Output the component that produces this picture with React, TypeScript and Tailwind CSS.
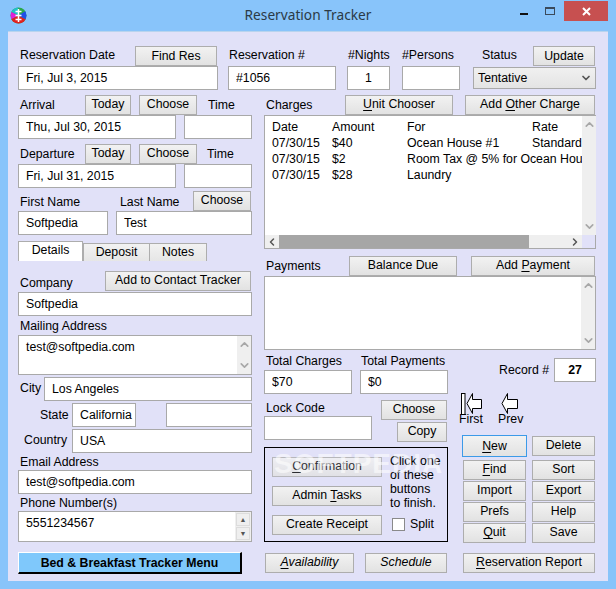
import React from "react";
import { ChevronUp, ChevronDown, ChevronLeft, ChevronRight } from "lucide-react";

function Btn({ className = "", children }: { className?: string; children: React.ReactNode }) {
  return (
    <button className={"h-5 shrink-0 flex items-center justify-center border border-[#adadad] bg-gradient-to-b from-[#f2f2f2] to-[#e2e2e2] pb-px text-black leading-none " + className}>
      {children}
    </button>
  );
}

function Field({ className = "", value = "" }: { className?: string; value?: string }) {
  return (
    <input
      readOnly
      value={value}
      className={"h-6 shrink-0 border border-[#a9a9a9] bg-white px-[7px] pb-px text-black outline-none " + className}
    />
  );
}

function Label({ className = "", children }: { className?: string; children: React.ReactNode }) {
  return <span className={"block shrink-0 whitespace-nowrap leading-none " + className}>{children}</span>;
}

function VBar({ className = "" }: { className?: string }) {
  return (
    <div className={"flex w-[14px] shrink-0 flex-col items-center justify-between bg-[#efefef] py-[2px] text-[#a8a8a8] " + className}>
      <ChevronUp size={13} strokeWidth={3} />
      <ChevronDown size={13} strokeWidth={3} />
    </div>
  );
}

function Row({ cols }: { cols: string[] }) {
  return (
    <div className="flex h-4 items-center whitespace-nowrap">
      <span className="w-[60px] shrink-0">{cols[0]}</span>
      <span className="w-[75px] shrink-0">{cols[1]}</span>
      <span className="w-[125px] shrink-0">{cols[2]}</span>
      <span className="shrink-0">{cols[3]}</span>
    </div>
  );
}

function AppIcon() {
  return (
    <svg width="17" height="17" viewBox="0 0 17 17" className="shrink-0">
      <defs>
        <clipPath id="ic"><circle cx="8.5" cy="8.5" r="8" /></clipPath>
      </defs>
      <g clipPath="url(#ic)">
        <rect width="17" height="17" fill="#2aa84a" />
        <path d="M8.5 8.5 L0 4 L0 13 Z" fill="#e020d8" />
        <path d="M8.5 8.5 L0 13 L0 17 L17 17 L17 13 Z" fill="#e02020" />
        <path d="M8.5 8.5 L17 13 L17 3 Z" fill="#2050e8" />
        <path d="M8.5 8.5 L0 4 L3 0 L8 0 Z" fill="#20c0c8" />
      </g>
      <path d="M5.5 4.5h6M5.5 8.5h6M5.5 12.5h6M8.5 2v13" stroke="#fff" strokeWidth="1.5" fill="none" />
    </svg>
  );
}

function FirstArrow() {
  return (
    <svg width="24" height="22" viewBox="0 0 24 22" className="block">
      <rect x="2.5" y="0.5" width="3.5" height="21" fill="#fff" stroke="#000" />
      <path d="M8 10.5 L13.5 0.5 V6.5 H22.5 V15.5 H13.5 V20.5 Z" fill="#fff" stroke="#000" />
    </svg>
  );
}

function PrevArrow() {
  return (
    <svg width="20" height="22" viewBox="0 0 20 22" className="block">
      <path d="M4 10.5 L9.5 0.5 V6.5 H19.5 V15.5 H9.5 V20.5 Z" fill="#fff" stroke="#000" />
    </svg>
  );
}

export default function App() {
  return (
    <div className="flex h-[589px] w-[616px] flex-col overflow-hidden bg-[#88c4fa] font-['Liberation_Sans',Arial,sans-serif] text-[12.3px] text-black">
      {/* Title bar */}
      <div className="relative flex h-[31px] shrink-0 items-center justify-center">
        <div className="absolute left-[10px] top-[7px]"><AppIcon /></div>
        <span className="pb-[2px] font-['Noto_Sans',sans-serif] text-[13.7px] leading-none text-[#2b3a46]">Reservation Tracker</span>
        <div className="absolute right-[88px] top-[13px] h-[2px] w-2 bg-[#111]" />
        <div className="absolute right-[61px] top-[7px] h-[8px] w-[10px] border border-t-2 border-[#3a4a5a]" />
        <div className="absolute right-[8px] top-[1px] flex h-5 w-[44px] items-center justify-center bg-[#c75050]">
          <svg width="9" height="9" viewBox="0 0 9 9"><path d="M1 1l7 7M8 1l-7 7" stroke="#fff" strokeWidth="2" /></svg>
        </div>
      </div>

      {/* Window body */}
      <div className="ml-2 flex h-[550px] w-[600px] flex-col border-t border-[#b8d4ee] bg-[#e1e1f8] pl-[10px] pt-[14px]">
        {/* Top row */}
        <div className="flex h-11 shrink-0">
          <div className="w-[200px] shrink-0">
            <div className="flex h-5 items-center justify-between pr-px">
              <Label className="pb-[2px] pl-[2px]">Reservation Date</Label>
              <Btn className="w-[82px] pt-[2px]">Find Res</Btn>
            </div>
            <Field className="w-[200px]" value="Fri, Jul 3, 2015" />
          </div>
          <div className="ml-[10px] w-[108px] shrink-0">
            <Label className="flex h-5 items-center pb-[2px] pl-px">Reservation #</Label>
            <Field className="w-[108px]" value="#1056" />
          </div>
          <div className="ml-[11px] w-[43px] shrink-0">
            <Label className="flex h-5 items-center pb-[2px] pl-px">#Nights</Label>
            <Field className="w-[43px] text-center" value="1" />
          </div>
          <div className="ml-3 w-[58px] shrink-0">
            <Label className="flex h-5 items-center pb-[2px]">#Persons</Label>
            <Field className="w-[58px]" />
          </div>
          <div className="ml-[13px] w-[123px] shrink-0">
            <div className="flex h-5 items-center justify-between pr-px">
              <Label className="pb-[2px] pl-[9px]">Status</Label>
              <Btn className="w-[62px] pt-[2px]">Update</Btn>
            </div>
            <div className="mt-px flex h-[22px] items-center justify-between border border-[#a9a9a9] bg-gradient-to-b from-[#f0f0f0] to-[#e4e4e4] pl-1 pr-[3px]">
              <span>Tentative</span>
              <ChevronDown size={12} strokeWidth={3.5} className="text-[#555]" />
            </div>
          </div>
        </div>

        {/* Main */}
        <div className="mt-[5px] flex">
          {/* Left column */}
          <div className="w-[234px] shrink-0">
            <div className="flex h-5 items-center">
              <Label className="w-[67px] pl-[2px]">Arrival</Label>
              <Btn className="w-[46px]">Today</Btn>
              <Btn className="ml-2 w-[58px]">Choose</Btn>
              <Label className="ml-[11px]">Time</Label>
            </div>
            <div className="flex gap-2">
              <Field className="w-[158px]" value="Thu, Jul 30, 2015" />
              <Field className="w-[68px]" />
            </div>
            <div className="mt-[5px] flex h-5 items-center">
              <Label className="w-[67px] pl-[2px]">Departure</Label>
              <Btn className="w-[46px]">Today</Btn>
              <Btn className="ml-2 w-[58px]">Choose</Btn>
              <Label className="ml-[10px]">Time</Label>
            </div>
            <div className="flex gap-2">
              <Field className="w-[158px]" value="Fri, Jul 31, 2015" />
              <Field className="w-[68px]" />
            </div>
            <div className="mt-[3px] flex h-5 items-end">
              <Label className="w-[100px] pb-[3px] pl-[2px]">First Name</Label>
              <Label className="w-[75px] pb-[3px] pl-[2px]">Last Name</Label>
              <Btn className="w-[58px]">Choose</Btn>
            </div>
            <div className="flex gap-2">
              <Field className="w-[90px]" value="Softpedia" />
              <Field className="w-[136px]" value="Test" />
            </div>

            {/* Tabs */}
            <div className="mt-[6px] flex h-5 items-end">
              <div className="flex h-5 w-[65px] items-center justify-center border-x border-t border-[#adadad] bg-white pb-[2px]">Details</div>
              <div className="flex h-[18px] w-[67px] items-center justify-center border-x border-t border-[#adadad] bg-gradient-to-b from-[#f2f2f2] to-[#e6e6e6]">Deposit</div>
              <div className="flex h-[18px] w-[57px] items-center justify-center border-r border-t border-[#adadad] bg-gradient-to-b from-[#f2f2f2] to-[#e6e6e6]">Notes</div>
            </div>

            <div className="mt-[10px] flex h-5 items-end justify-between pr-px">
              <Label className="pb-[2px] pl-[2px]">Company</Label>
              <Btn className="w-[146px]">Add to Contact Tracker</Btn>
            </div>
            <Field className="mt-px w-[234px]" value="Softpedia" />
            <Label className="flex h-[19px] items-center pl-[2px] pt-[2px]">Mailing Address</Label>
            <div className="flex h-10 border border-[#a9a9a9] bg-white">
              <div className="flex-1 px-[7px] pt-[3px] leading-[16px]">test@softpedia.com</div>
              <VBar />
            </div>
            <div className="mt-[2px] flex items-center">
              <Label className="w-[26px] pb-[2px] pl-[2px]">City</Label>
              <Field className="w-[208px]" value="Los Angeles" />
            </div>
            <div className="mt-[2px] flex items-center">
              <Label className="w-[54px] pl-[22px]">State</Label>
              <Field className="w-[64px] pr-0" value="California" />
              <Field className="ml-[30px] w-[86px]" />
            </div>
            <div className="mt-[2px] flex items-center">
              <Label className="w-[54px] pb-px pl-[6px]">Country</Label>
              <Field className="w-[180px]" value="USA" />
            </div>
            <Label className="flex h-[17px] items-center pl-[2px] pt-[2px]">Email Address</Label>
            <Field className="w-[234px]" value="test@softpedia.com" />
            <Label className="flex h-[17px] items-center pl-[2px] pt-[2px]">Phone Number(s)</Label>
            <div className="flex h-[31px] border border-[#a9a9a9] bg-white">
              <div className="flex-1 px-[7px] pt-[3px] leading-[16px]">5551234567</div>
              <div className="flex w-[16px] flex-col gap-px bg-[#efefef] p-px">
                <div className="flex flex-1 items-center justify-center border border-[#dcdcdc] text-[7px] leading-none text-[#555]">▲</div>
                <div className="flex flex-1 items-center justify-center border border-[#dcdcdc] text-[7px] leading-none text-[#555]">▼</div>
              </div>
            </div>
            <button className="mt-[10px] flex h-[22px] w-[224px] items-center justify-center border-b-2 border-l border-r-2 border-t border-b-black border-l-white border-r-black border-t-white bg-[#7fc8fb] pt-px font-bold leading-none">
              Bed &amp; Breakfast Tracker Menu
            </button>
          </div>

          {/* Right column */}
          <div className="ml-3 w-[332px] shrink-0">
            <div className="flex h-5 items-center">
              <Label className="w-[81px] pl-[2px]">Charges</Label>
              <Btn className="w-[108px]"><span><u className="underline-offset-2">U</u>nit Chooser</span></Btn>
              <Btn className="ml-3 w-[130px]"><span>Add <u className="underline-offset-2">O</u>ther Charge</span></Btn>
            </div>
            <div className="flex h-[134px] border border-[#a9a9a9] bg-white">
              <div className="flex min-w-0 flex-1 flex-col">
                <div className="h-[119px] overflow-hidden pl-[7px] pt-[3px]">
                  <Row cols={["Date", "Amount", "For", "Rate"]} />
                  <Row cols={["07/30/15", "$40", "Ocean House #1", "Standard"]} />
                  <Row cols={["07/30/15", "$2", "Room Tax @ 5% for Ocean House #1", ""]} />
                  <Row cols={["07/30/15", "$28", "Laundry", ""]} />
                </div>
                <div className="flex h-[13px] items-center bg-[#efefef] text-[#555]">
                  <div className="flex w-[14px] justify-center"><ChevronLeft size={12} strokeWidth={3} /></div>
                  <div className="h-full w-[250px] bg-[#a6a6a6]" />
                  <div className="flex flex-1 justify-end pr-px"><ChevronRight size={12} strokeWidth={3} /></div>
                </div>
              </div>
              <div className="flex w-[13px] shrink-0 flex-col">
                <VBar className="h-[119px] w-[13px]" />
                <div className="h-[13px] bg-[#e1e1f8]" />
              </div>
            </div>
            <div className="mt-[7px] flex h-5 items-center">
              <Label className="w-[85px] pl-[2px]">Payments</Label>
              <Btn className="w-[108px]">Balance Due</Btn>
              <Btn className="ml-[14px] w-[124px]"><span>Add <u className="underline-offset-2">P</u>ayment</span></Btn>
            </div>
            <div className="flex h-[74px] justify-end border border-[#a9a9a9] bg-white">
              <VBar className="w-[13px]" />
            </div>

            <div className="flex">
              {/* Lower middle */}
              <div className="w-[184px] shrink-0">
                <div className="flex h-5 items-center pt-[2px]">
                  <Label className="w-[97px] pl-[2px]">Total Charges</Label>
                  <Label>Total Payments</Label>
                </div>
                <div className="flex gap-2">
                  <Field className="w-[88px]" value="$70" />
                  <Field className="w-[88px]" value="$0" />
                </div>
                <div className="mt-[6px] flex">
                  <div className="w-[108px] shrink-0">
                    <Label className="flex h-4 items-center pl-[2px]">Lock Code</Label>
                    <Field className="w-[108px]" />
                  </div>
                  <div className="ml-[9px] flex w-[66px] flex-col items-end gap-[2px]">
                    <Btn className="w-[66px]">Choose</Btn>
                    <Btn className="w-[50px]">Copy</Btn>
                  </div>
                </div>
                <div className="relative mt-[5px] flex h-[95px] w-[184px] border-[1.5px] border-black pl-[7px] pt-[9px]">
                  <div className="flex w-[110px] shrink-0 flex-col gap-[9px]">
                    <Btn className="w-[110px] opacity-80"><span><u className="underline-offset-2">C</u>onfirmation</span></Btn>
                    <Btn className="w-[110px]"><span>Admin <u className="underline-offset-2">T</u>asks</span></Btn>
                    <Btn className="w-[110px]">Create Receipt</Btn>
                  </div>
                  <div className="ml-2 flex flex-col">
                    <div className="-mt-[3px] whitespace-nowrap leading-[14px]">Click one<br />of these<br />buttons<br />to finish.</div>
                    <div className="mt-[8px] flex items-center">
                      <div className="ml-[2px] h-[13px] w-[13px] border border-[#8a8a8a] bg-white" />
                      <Label className="ml-[5px]">Split</Label>
                    </div>
                  </div>
                  <div className="pointer-events-none absolute left-[9px] top-[2px] whitespace-nowrap text-[28px] font-bold leading-none tracking-[1px] text-white opacity-55">SOFTPEDIA</div>
                </div>
                <div className="mt-[11px] flex pl-px">
                  <Btn className="w-[89px] italic"><span><u className="underline-offset-2">A</u>vailability</span></Btn>
                  <Btn className="ml-[11px] w-[82px] italic">Schedule</Btn>
                </div>
              </div>

              {/* Lower right */}
              <div className="w-[148px] shrink-0 pt-2">
                <div className="flex h-6 items-center justify-end">
                  <Label className="mr-[5px] pt-px">Record #</Label>
                  <div className="flex h-6 w-[42px] items-center justify-center border border-[#a9a9a9] bg-white font-bold">27</div>
                </div>
                <div className="ml-[11px] mt-[11px] flex h-[40px]">
                  <div className="w-[39px] shrink-0">
                    <FirstArrow />
                    <Label className="-mt-[2px] leading-[14px]">First</Label>
                  </div>
                  <div className="w-[30px] shrink-0">
                    <div className="ml-[0px]"><PrevArrow /></div>
                    <Label className="-mt-[2px] leading-[14px]">Prev</Label>
                  </div>
                </div>
                <div className="ml-[15px] mt-[3px] grid w-[132px] grid-cols-2 gap-x-[6px] gap-y-px">
                  <div className="relative mb-[3px] h-5 w-[63px]">
                    <button className="absolute -left-px -top-px flex h-[22px] w-[65px] items-center justify-center border border-[#3c9ae8] bg-gradient-to-b from-[#f2f2f2] to-[#e2e2e2] leading-none"><span><u className="underline-offset-2">N</u>ew</span></button>
                  </div>
                  <Btn className="mb-[3px] w-[63px]">Delete</Btn>
                  <Btn className="w-[63px]"><span><u className="underline-offset-2">F</u>ind</span></Btn>
                  <Btn className="w-[63px]">Sort</Btn>
                  <Btn className="w-[63px]">Import</Btn>
                  <Btn className="w-[63px]">Export</Btn>
                  <Btn className="w-[63px]">Prefs</Btn>
                  <Btn className="w-[63px]">Help</Btn>
                  <Btn className="w-[63px]"><span><u className="underline-offset-2">Q</u>uit</span></Btn>
                  <Btn className="w-[63px]">Save</Btn>
                </div>
                <Btn className="ml-[15px] mt-[10px] w-[132px]"><span><u className="underline-offset-2">R</u>eservation Report</span></Btn>
              </div>
            </div>
          </div>
        </div>
      </div>
    </div>
  );
}
